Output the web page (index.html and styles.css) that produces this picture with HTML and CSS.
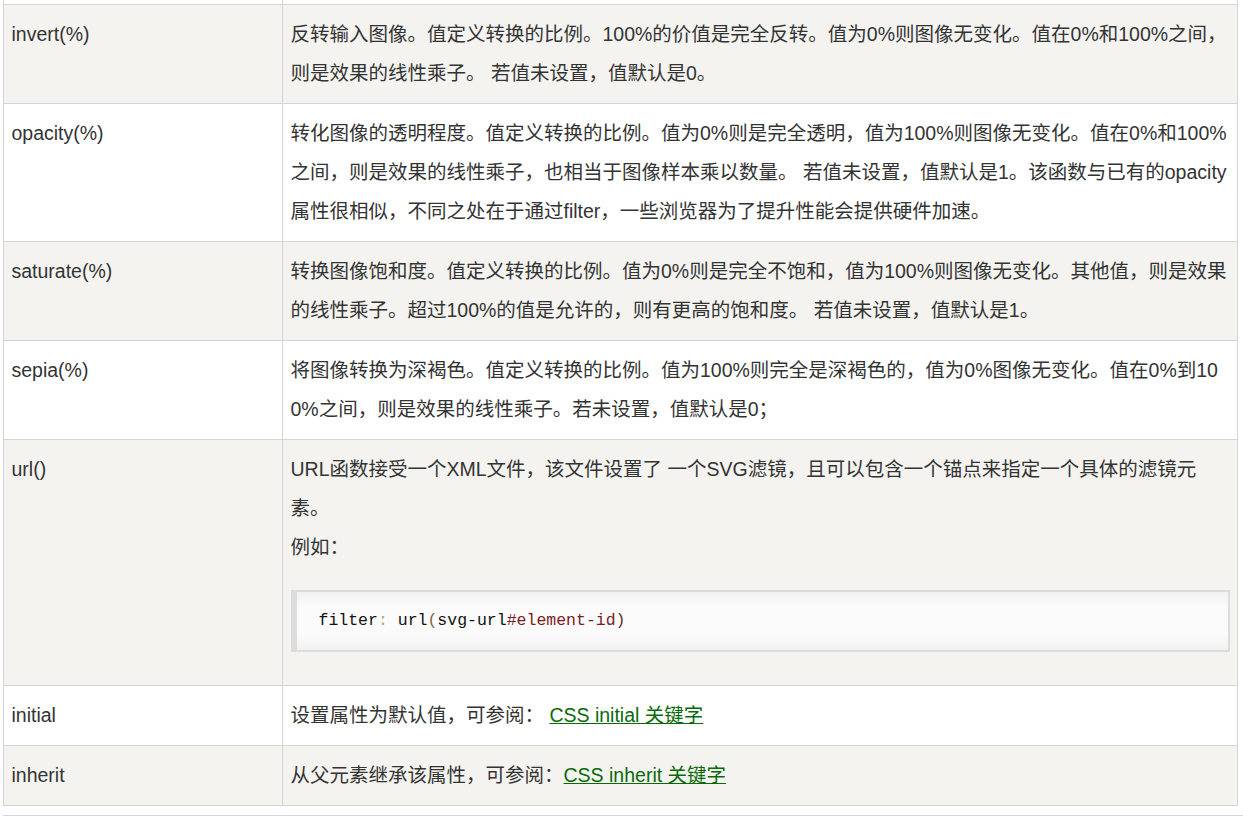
FILE: index.html
```html
<!DOCTYPE html>
<html lang="zh-CN">
<head>
    <meta charset="UTF-8">
    <meta name="viewport" content="width=device-width, initial-scale=1.0">
    <title>CSS filter 属性</title>
    <link rel="stylesheet" href="styles.css">
</head>
<body>
    <table class="reference">
      <colgroup>
        <col class="col-name">
        <col class="col-desc">
      </colgroup>
      <tr class="cut">
        <td></td>
        <td></td>
      </tr>
      <tr>
        <td>invert(%)</td>
        <td>反转输入图像。值定义转换的比例。100%的价值是完全反转。值为0%则图像无变化。值在0%和100%之间，则是效果的线性乘子。 若值未设置，值默认是0。</td>
      </tr>
      <tr>
        <td>opacity(%)</td>
        <td>转化图像的透明程度。值定义转换的比例。值为0%则是完全透明，值为100%则图像无变化。值在0%和100%之间，则是效果的线性乘子，也相当于图像样本乘以数量。 若值未设置，值默认是1。该函数与已有的opacity属性很相似，不同之处在于通过filter，一些浏览器为了提升性能会提供硬件加速。</td>
      </tr>
      <tr>
        <td>saturate(%)</td>
        <td>转换图像饱和度。值定义转换的比例。值为0%则是完全不饱和，值为100%则图像无变化。其他值，则是效果的线性乘子。超过100%的值是允许的，则有更高的饱和度。 若值未设置，值默认是1。</td>
      </tr>
      <tr>
        <td>sepia(%)</td>
        <td>将图像转换为深褐色。值定义转换的比例。值为100%则完全是深褐色的，值为0%图像无变化。值在0%到100%之间，则是效果的线性乘子。若未设置，值默认是0；</td>
      </tr>
      <tr>
        <td>url()</td>
        <td>URL函数接受一个XML文件，该文件设置了 一个SVG滤镜，且可以包含一个锚点来指定一个具体的滤镜元素。<br>例如：
          <pre class="code"><span class="kw">filter</span><span class="pun">:</span> <span class="kw">url</span><span class="par">(</span><span class="kw">svg-url</span><span class="str">#element-id</span><span class="end">)</span></pre>
        </td>
      </tr>
      <tr>
        <td>initial</td>
        <td>设置属性为默认值，可参阅： <a href="#">CSS initial 关键字</a></td>
      </tr>
      <tr>
        <td>inherit</td>
        <td>从父元素继承该属性，可参阅：<a href="#">CSS inherit 关键字</a></td>
      </tr>
    </table>
    <div class="next-block"></div>
</body>
</html>
```

FILE: styles.css
```css
* {
  box-sizing: border-box;
}

body {
  margin: 0 0 0 3px;
  background: #fff;
  color: #333;
  font-family: "Liberation Sans", Arial, "Noto Sans CJK SC", sans-serif;
  font-size: 19.5px;
}

.reference {
  width: 1235px;
  border-collapse: collapse;
  table-layout: fixed;
  font-size: 19.5px;
}

.col-name {
  width: 279px;
}

.reference td {
  border: 1px solid #d4d4d4;
  padding: 10px 7.5px;
  line-height: 39px;
  vertical-align: top;
  word-break: break-all;
}

.reference tr:nth-child(even) {
  background-color: #f4f3f0;
}

.reference tr.cut td {
  height: 4px;
  padding: 0;
  border-top: none;
  line-height: 0;
}

.reference a {
  color: #0a6a0a;
  text-decoration: underline;
}

/* code sample inside the url() row */
.code {
  margin: 23px 0;
  padding: 16px 22px;
  border: 2px solid #dcdcdc;
  border-left: 6px solid #dcdcdc;
  background: linear-gradient(#f1f1f1, #fbfbfb 28%, #fbfbfb 72%, #f1f1f1);
  font-family: "Liberation Mono", "DejaVu Sans Mono", monospace;
  font-size: 16.5px;
  line-height: 26px;
  white-space: pre;
  word-break: normal;
}

.code .kw { color: #111; }
.code .pun { color: #b9a36e; }
.code .par { color: #7d6248; }
.code .str { color: #7a1c1c; }
.code .end { color: #5a2f2f; }

.next-block {
  margin-top: 9px;
  border-top: 1px solid #d4d4d4;
  height: 10px;
}
```
